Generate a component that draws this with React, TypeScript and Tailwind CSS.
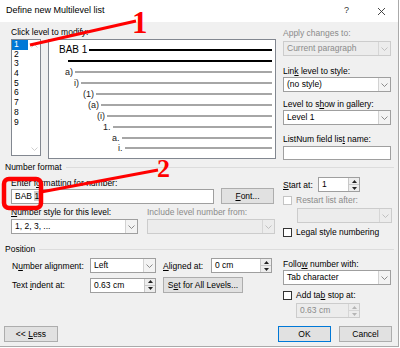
import type { ReactNode } from "react";

const levels = [1, 2, 3, 4, 5, 6, 7, 8, 9];

const previewRows = [
  { pl: "pl-[10px]", label: "BAB 1", heading: true },
  { pl: "pl-[19px]", label: "", heading: true },
  { pl: "pl-[16px]", label: "a)" },
  { pl: "pl-[25px]", label: "i)" },
  { pl: "pl-[34px]", label: "(1)" },
  { pl: "pl-[39px]", label: "(a)" },
  { pl: "pl-[48px]", label: "(i)" },
  { pl: "pl-[54px]", label: "1." },
  { pl: "pl-[63px]", label: "a." },
  { pl: "pl-[69px]", label: "i." },
];

function Chevron({ up, color = "#6b6b6b" }: { up?: boolean; color?: string }) {
  return (
    <svg width="7" height="4" viewBox="0 0 7 4">
      <path d={up ? "M0.5 3.5 L3.5 0.5 L6.5 3.5" : "M0.5 0.5 L3.5 3.5 L6.5 0.5"} fill="none" stroke={color} strokeWidth="0.8" />
    </svg>
  );
}

function Tri({ up, color = "#222" }: { up?: boolean; color?: string }) {
  return (
    <svg width="5" height="3" viewBox="0 0 5 3">
      <path d={up ? "M0 3 L2.5 0 L5 3 Z" : "M0 0 L2.5 3 L5 0 Z"} fill={color} />
    </svg>
  );
}

function Combo({ value, className = "", disabled = false }: { value: string; className?: string; disabled?: boolean }) {
  return (
    <div className={`flex h-[15px] border ${disabled ? "border-[#cccccc] bg-[#ececec] text-[#8b8b8b]" : "border-[#9f9f9f] bg-white"} ${className}`}>
      <div className="flex-1 pl-[3px] leading-[13px] whitespace-nowrap overflow-hidden">{value}</div>
      <div className={`w-[12px] flex items-center justify-center border-l ${disabled ? "border-[#d6d6d6]" : "border-[#d2d2d2] bg-[#f3f3f3]"}`}>
        <Chevron color={disabled ? "#b5b5b5" : "#707070"} />
      </div>
    </div>
  );
}

function Spin({ value, className = "", disabled = false }: { value: string; className?: string; disabled?: boolean }) {
  return (
    <div className={`flex h-[15px] border ${disabled ? "border-[#cccccc] bg-[#ececec] text-[#8b8b8b]" : "border-[#9f9f9f] bg-white"} ${className}`}>
      <div className="flex-1 pl-[3px] leading-[13px] whitespace-nowrap">{value}</div>
      <div className={`w-[11px] flex flex-col border-l ${disabled ? "border-[#d6d6d6]" : "border-[#c8c8c8] bg-[#ededed]"}`}>
        <div className={`flex-1 flex items-center justify-center border-b ${disabled ? "border-[#d6d6d6]" : "border-[#c8c8c8]"}`}>
          <Tri up color={disabled ? "#b5b5b5" : "#222"} />
        </div>
        <div className="flex-1 flex items-center justify-center">
          <Tri color={disabled ? "#b5b5b5" : "#222"} />
        </div>
      </div>
    </div>
  );
}

function Check({ label, disabled = false }: { label: ReactNode; disabled?: boolean }) {
  return (
    <div className={`flex items-center h-[10px] ${disabled ? "text-[#8b8b8b]" : ""}`}>
      <div className={`w-[9px] h-[9px] border bg-white ${disabled ? "border-[#c4c4c4]" : "border-[#333333]"}`} />
      <span className="ml-[4px] leading-[10px] whitespace-nowrap">{label}</span>
    </div>
  );
}

function Btn({ children, className = "", primary = false }: { children: ReactNode; className?: string; primary?: boolean }) {
  return (
    <div className={`h-[16px] flex items-center justify-center whitespace-pre bg-[#e1e1e1] border ${primary ? "border-[#0078d7]" : "border-[#adadad]"} ${className}`}>
      {children}
    </div>
  );
}

function Lbl({ children, className = "" }: { children: ReactNode; className?: string }) {
  return <div className={`h-[12px] leading-[12px] whitespace-nowrap ${className}`}>{children}</div>;
}

function Group({ title, className = "" }: { title: string; className?: string }) {
  return (
    <div className={`flex items-center h-[12px] pl-[5px] pr-[4px] ${className}`}>
      <span className="leading-[12px]">{title}</span>
      <div className="flex-1 h-px bg-[#dcdcdc] ml-[4px]" />
    </div>
  );
}

export default function App() {
  return (
    <div className="relative w-[400px] h-[348px] overflow-hidden bg-white font-['Liberation_Sans',Arial,sans-serif] text-[8.5px] text-black">
      <div className="w-[399px] h-[347px] border-r border-b border-[#aaaaaa] flex flex-col">
        {/* title bar */}
        <div className="h-[22px] flex items-center pl-[6px] bg-white">
          <span className="text-[9px]">Define new Multilevel list</span>
          <span className="ml-auto text-[9px] text-[#333]">?</span>
          <svg width="7" height="7" viewBox="0 0 7 7" className="ml-[29px] mr-[13px]">
            <path d="M0 0 L7 7 M7 0 L0 7" stroke="#333" strokeWidth="0.9" />
          </svg>
        </div>

        <div className="flex-1 bg-[#f0f0f0] flex flex-col">
          {/* levels + preview + right options */}
          <div className="flex pl-[11px] pt-[4px]">
            <div className="flex flex-col w-[265px]">
              <Lbl>Click level to modify:</Lbl>
              <div className="mt-[1px] flex gap-[7px]">
                <div className="w-[30px] h-[117px] bg-white border border-[#828790] flex">
                  <div className="flex-1 flex flex-col">
                    {levels.map((n) => (
                      <div key={n} className={`h-[9.7px] leading-[9.7px] pl-[2px] ${n === 1 ? "bg-[#0078d7] text-white" : ""}`}>
                        {n}
                      </div>
                    ))}
                  </div>
                  <div className="w-[12px] flex flex-col justify-between items-center py-[4px]">
                    <Chevron up color="#c2c2c2" />
                    <Chevron color="#c2c2c2" />
                  </div>
                </div>
                <div className="w-[228px] h-[120px] bg-white border border-[#828790] pt-[5px] pr-[3px] flex flex-col">
                  {previewRows.map((r, i) => (
                    <div key={i} className={`h-[10.9px] flex items-center ${r.pl}`}>
                      {r.label && (
                        <span className={`${r.heading ? "text-[10px]" : "text-[9px] text-[#222]"} leading-[10px] whitespace-nowrap`}>{r.label}</span>
                      )}
                      <div className={`flex-1 h-[2px] ${r.label ? "ml-[2px]" : ""} ${r.heading ? "bg-black" : "bg-[#a6a6a6]"}`} />
                    </div>
                  ))}
                </div>
              </div>
            </div>

            <div className="ml-[7px] w-[108px] flex flex-col">
              <Lbl className="mt-[1px] text-[#8b8b8b]">Apply changes to:</Lbl>
              <Combo className="mt-[2px]" value="Current paragraph" disabled />
              <Lbl className="mt-[9px]">
                Lin<u>k</u> level to style:
              </Lbl>
              <Combo value="(no style)" />
              <Lbl className="mt-[6px]">
                Level to s<u>h</u>ow in gallery:
              </Lbl>
              <Combo value="Level 1" />
              <Lbl className="mt-[8px]">
                ListNum field lis<u>t</u> name:
              </Lbl>
              <div className="mt-[1px] h-[14px] bg-white border border-[#9f9f9f]" />
            </div>
          </div>

          {/* number format */}
          <Group title="Number format" className="mt-[1px]" />
          <div className="flex pl-[11px]">
            <div className="w-[264px] flex flex-col">
              <Lbl className="mt-[4px]">
                Enter f<u>o</u>rmatting for number:
              </Lbl>
              <div className="flex items-start">
                <div className="w-[203px] h-[15px] bg-white border border-[#9f9f9f] pl-[3px] leading-[13px]">
                  BAB <span className="bg-[#cdcdcd]">1</span>
                </div>
                <Btn className="ml-[7px] w-[53px] mt-[-1px]">
                  <u>F</u>ont...
                </Btn>
              </div>
              <div className="flex mt-[2px]">
                <Lbl className="w-[136px]">
                  <u>N</u>umber style for this level:
                </Lbl>
                <Lbl className="text-[#8b8b8b]">Include level number from:</Lbl>
              </div>
              <div className="flex mt-[1px]">
                <Combo className="w-[127px]" value="1, 2, 3, ..." />
                <Combo className="ml-[9px] w-[128px]" value="" disabled />
              </div>
            </div>

            <div className="ml-[8px] w-[110px] flex flex-col">
              <div className="flex items-center mt-[4px]">
                <span className="w-[35px] leading-[12px]">
                  <u>S</u>tart at:
                </span>
                <Spin className="w-[42px]" value="1" />
              </div>
              <div className="mt-[3px]">
                <Check disabled label="Restart list after:" />
              </div>
              <Combo className="mt-[3px] ml-[14px] w-[95px]" value="" disabled />
              <div className="mt-[4px]">
                <Check label="Legal style numbering" />
              </div>
            </div>
          </div>

          {/* position */}
          <Group title="Position" className="mt-[6px]" />
          <div className="flex pl-[12px]">
            <div className="w-[260px] flex flex-col">
              <div className="flex items-center mt-[3px]">
                <span className="w-[78px] leading-[12px]">
                  N<u>u</u>mber alignment:
                </span>
                <Combo className="w-[66px]" value="Left" />
                <span className="ml-[7px] w-[48px] leading-[12px]">
                  <u>A</u>ligned at:
                </span>
                <Spin className="w-[61px]" value="0 cm" />
              </div>
              <div className="flex items-center mt-[4px]">
                <span className="w-[78px] leading-[12px]">
                  Text <u>i</u>ndent at:
                </span>
                <Spin className="w-[66px]" value="0.63 cm" />
                <Btn className="ml-[7px] w-[80px]">
                  S<u>e</u>t for All Levels...
                </Btn>
              </div>
            </div>

            <div className="ml-[11px] w-[108px] flex flex-col">
              <Lbl className="mt-[3px]">
                Follo<u>w</u> number with:
              </Lbl>
              <Combo value="Tab character" />
              <div className="mt-[5px]">
                <Check
                  label={
                    <>
                      Add ta<u>b</u> stop at:
                    </>
                  }
                />
              </div>
              <Spin className="mt-[3px] ml-[13px] w-[64px]" value="0.63 cm" disabled />
            </div>
          </div>

          {/* buttons */}
          <div className="flex pl-[4px] pr-[6px] mt-[8px]">
            <Btn className="w-[54px]">
              {"<< "}
              <u>L</u>ess
            </Btn>
            <Btn primary className="ml-auto w-[53px]">
              OK
            </Btn>
            <Btn className="ml-[8px] w-[53px]">Cancel</Btn>
          </div>
        </div>
      </div>

      {/* red annotations drawn over the screenshot */}
      <svg className="absolute inset-0 pointer-events-none" width="400" height="348" viewBox="0 0 400 348">
        <line x1="30" y1="45" x2="136" y2="21" stroke="#ff0000" strokeWidth="3" />
        <rect x="4" y="179" width="37" height="29" rx="5" fill="none" stroke="#ff0000" strokeWidth="4.5" />
        <line x1="41" y1="192" x2="158" y2="170" stroke="#ff0000" strokeWidth="3" />
      </svg>
      <span className="absolute left-[132px] top-[7px] text-[31px] leading-[31px] font-bold text-[#ff0000] font-['Liberation_Serif',serif]">1</span>
      <span className="absolute left-[157px] top-[156px] text-[26px] leading-[26px] font-bold text-[#ff0000] font-['Liberation_Serif',serif]">2</span>
    </div>
  );
}
